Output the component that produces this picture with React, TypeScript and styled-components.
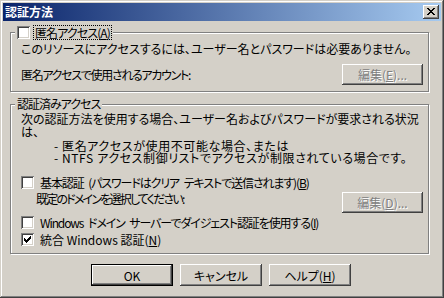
import React from "react";
import styled, { createGlobalStyle } from "styled-components";

const GlobalStyle = createGlobalStyle`
  html, body {
    margin: 0;
    padding: 0;
    background: #d4d0c8;
  }
  body {
    font-family: "Noto Sans CJK JP", "Noto Sans", sans-serif;
  }
`;

const Window = styled.div`
  width: 444px;
  height: 298px;
  box-sizing: border-box;
  padding: 3px;
  background: #d4d0c8;
  color: #000;
  font-size: 12px;
  font-feature-settings: "palt";
  box-shadow: inset -1px -1px #404040, inset 1px 1px #d4d0c8,
    inset -2px -2px #808080, inset 2px 2px #fff;
  display: flex;
  flex-direction: column;
`;
const TitleBar = styled.div`
  height: 18px;
  flex: none;
  display: flex;
  align-items: center;
  justify-content: space-between;
  padding: 0 2px 0 2px;
  background: linear-gradient(to right, #0a246a, #a6caf0);
`;
const TitleText = styled.span`
  color: #fff;
  font-weight: bold;
  font-size: 12px;
  line-height: 18px;
`;
const CloseBtn = styled.div`
  width: 16px;
  height: 14px;
  box-sizing: border-box;
  background: #d4d0c8;
  box-shadow: inset -1px -1px #404040, inset 1px 1px #fff,
    inset -2px -2px #808080, inset 2px 2px #d4d0c8;
  display: flex;
  align-items: center;
  justify-content: center;
  padding: 0 1px 1px 0;
`;
const Content = styled.div`
  display: flex;
  flex-direction: column;
  padding: 5px 0 0 7px;
`;
const Group = styled.fieldset<{ $pad: string; $top?: number }>`
  width: 419px;
  box-sizing: border-box;
  min-width: 0;
  margin: ${(p) => p.$top || 0}px 0 0 0;
  padding: ${(p) => p.$pad};
  border: 1px solid #808080;
  box-shadow: inset 1px 1px #fff, 1px 1px #fff;
  display: flex;
  flex-direction: column;
`;
const Legend = styled.legend<{ $ls?: number }>`
  padding: 0 2px;
  margin-left: -6px;
  line-height: 14px;
  letter-spacing: ${(p) => p.$ls || 0}px;
  background: #d4d0c8;
`;
const LegendInner = styled.span`
  display: flex;
  align-items: center;
  gap: 4px;
`;
const Focus = styled.span`
  outline: 1px dotted #000;
  padding: 0 1px;
  line-height: 13px;
  letter-spacing: -0.9px;
`;
const Text = styled.div<{ $lh?: number; $indent?: number; $ls?: number; $mt?: number }>`
  line-height: ${(p) => p.$lh || 12}px;
  padding-left: ${(p) => p.$indent || 0}px;
  margin-top: ${(p) => p.$mt || 0}px;
  letter-spacing: ${(p) => p.$ls || 0}px;
  white-space: nowrap;
`;
const Row = styled.div<{ $top?: number; $align?: string }>`
  display: flex;
  align-items: ${(p) => p.$align || "center"};
  justify-content: space-between;
  margin-top: ${(p) => p.$top || 0}px;
`;
const Bullets = styled.div`
  margin-top: 2px;
  padding-left: 33px;
`;
const CheckRow = styled.div<{ $top?: number }>`
  display: flex;
  align-items: center;
  gap: 6px;
  height: 13px;
  line-height: 13px;
  margin-top: ${(p) => p.$top || 0}px;
  white-space: nowrap;
`;
const Label = styled.span<{ $ls?: number }>`
  letter-spacing: ${(p) => p.$ls || 0}px;
  word-spacing: ${(p) => (p.$ls ? 3 : 0)}px;
`;
const Box = styled.span`
  width: 13px;
  height: 13px;
  flex: none;
  box-sizing: border-box;
  background: #fff;
  box-shadow: inset 1px 1px #808080, inset -1px -1px #fff,
    inset 2px 2px #404040, inset -2px -2px #d4d0c8;
  display: flex;
  align-items: center;
  justify-content: center;
`;
const Button = styled.button<{ $w: number; $h: number; $default?: boolean }>`
  width: ${(p) => p.$w}px;
  height: ${(p) => p.$h}px;
  flex: none;
  box-sizing: border-box;
  margin: 0;
  padding: 0;
  font-family: inherit;
  font-size: 12px;
  font-feature-settings: "palt";
  background: #d4d0c8;
  border: ${(p) => (p.$default ? "1px solid #000" : "none")};
  box-shadow: inset -1px -1px #404040, inset 1px 1px #fff,
    inset -2px -2px #808080, inset 2px 2px #d4d0c8;
  color: #000;
  &:disabled {
    color: #808080;
    text-shadow: 1px 1px #fff;
  }
`;
const EditBtn = styled(Button)<{ $mt?: number }>`
  margin-top: ${(p) => p.$mt || 0}px;
`;
const ButtonRow = styled.div`
  display: flex;
  gap: 7px;
  margin-top: 10px;
  padding-left: 81px;
`;
const Key = styled.span`
  text-decoration: underline;
`;

const Pixels = ({ rows }: { rows: string[] }) => (
  <svg
    width={rows[0].length}
    height={rows.length}
    viewBox={`0 0 ${rows[0].length} ${rows.length}`}
    shapeRendering="crispEdges"
  >
    {rows.map((r, y) =>
      r.split("").map((c, x) =>
        c === "x" ? <rect key={`${x}-${y}`} x={x} y={y} width="1" height="1" fill="#000" /> : null
      )
    )}
  </svg>
);

const crossRows = ["xx....xx", ".xx..xx.", "..xxxx..", "...xx...", "..xxxx..", ".xx..xx.", "xx....xx"];
const tickRows = ["......x", ".....xx", "x...xxx", "xx.xxx.", "xxxxx..", ".xxx...", "..x...."];

function CheckBox({ checked }: { checked?: boolean }) {
  return <Box>{checked && <Pixels rows={tickRows} />}</Box>;
}

export default function App() {
  return (
    <>
      <GlobalStyle />
      <Window>
        <TitleBar>
          <TitleText>認証方法</TitleText>
          <CloseBtn>
            <Pixels rows={crossRows} />
          </CloseBtn>
        </TitleBar>
        <Content>
          <Group $pad="4px 5px 6px 10px">
            <Legend>
              <LegendInner>
                <CheckBox />
                <Focus>
                  匿名アクセス(<Key>A</Key>)
                </Focus>
              </LegendInner>
            </Legend>
            <Text>このリソースにアクセスするには、ユーザー名とパスワードは必要ありません。</Text>
            <Row $top={9}>
              <Text $ls={-1.3}>匿名アクセスで使用されるアカウント:</Text>
              <EditBtn $w={81} $h={21} disabled>
                編集(<Key>E</Key>)...
              </EditBtn>
            </Row>
          </Group>
          <Group $pad="1px 5px 7px 10px" $top={5}>
            <Legend $ls={-1}>認証済みアクセス</Legend>
            <Text $lh={13}>
              次の認証方法を使用する場合、ユーザー名およびパスワードが要求される状況
              <br />
              は、
            </Text>
            <Bullets>
              <Text $ls={0.6}>- 匿名アクセスが使用不可能な場合、または</Text>
              <Text $ls={0.6}>- NTFS アクセス制御リストでアクセスが制限されている場合です。</Text>
            </Bullets>
            <CheckRow $top={12}>
              <CheckBox />
              <Label $ls={-1.1}>
                基本認証 (パスワードはクリア テキストで送信されます)(<Key>B</Key>)
              </Label>
            </CheckRow>
            <Row $align="flex-start">
              <Text $indent={15} $ls={-1.8} $mt={4}>
                既定のドメインを選択してください:
              </Text>
              <EditBtn $w={81} $h={21} $mt={3} disabled>
                編集(<Key>D</Key>)...
              </EditBtn>
            </Row>
            <CheckRow $top={3}>
              <CheckBox />
              <Label $ls={-1.1}>
                Windows ドメイン サーバーでダイジェスト認証を使用する(<Key>I</Key>)
              </Label>
            </CheckRow>
            <CheckRow $top={4}>
              <CheckBox checked />
              <Label>
                統合 Windows 認証(<Key>N</Key>)
              </Label>
            </CheckRow>
          </Group>
          <ButtonRow>
            <Button $w={82} $h={22} $default>
              OK
            </Button>
            <Button $w={82} $h={22}>
              キャンセル
            </Button>
            <Button $w={82} $h={22}>
              ヘルプ(<Key>H</Key>)
            </Button>
          </ButtonRow>
        </Content>
      </Window>
    </>
  );
}
